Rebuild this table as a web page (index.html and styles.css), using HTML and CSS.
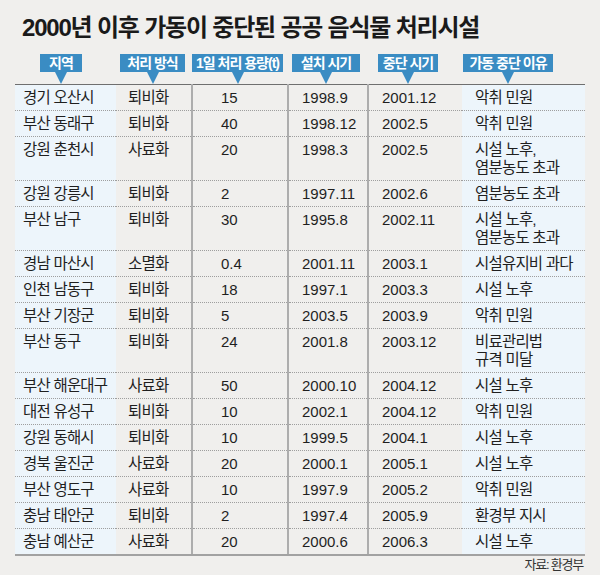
FILE: index.html
```html
<!DOCTYPE html>
<html lang="ko">
<head>
<meta charset="utf-8">
<title>2000년 이후 가동이 중단된 공공 음식물 처리시설</title>
<link rel="stylesheet" href="styles.css">
</head>
<body>
<div class="page">
  <h1 class="title">2000년 이후 가동이 중단된 공공 음식물 처리시설</h1>
  <table class="data">
    <colgroup>
      <col class="w1"><col class="w2"><col class="w3"><col class="w4"><col class="w5"><col class="w6">
    </colgroup>
    <thead>
      <tr>
        <th class="h1c"><span class="badge b1">지역</span></th>
        <th class="h2c"><span class="badge b2">처리 방식</span></th>
        <th class="h3c"><span class="badge b3">1일 처리 용량(t)</span></th>
        <th class="h4c"><span class="badge b4">설치 시기</span></th>
        <th class="h5c"><span class="badge b5">중단 시기</span></th>
        <th class="h6c"><span class="badge b6">가동 중단 이유</span></th>
      </tr>
    </thead>
    <tbody>
      <tr><td class="c1">경기 오산시</td><td class="c2">퇴비화</td><td class="c3">15</td><td class="c4">1998.9</td><td class="c5">2001.12</td><td class="c6">악취 민원</td></tr>
      <tr><td class="c1">부산 동래구</td><td class="c2">퇴비화</td><td class="c3">40</td><td class="c4">1998.12</td><td class="c5">2002.5</td><td class="c6">악취 민원</td></tr>
      <tr><td class="c1">강원 춘천시</td><td class="c2">사료화</td><td class="c3">20</td><td class="c4">1998.3</td><td class="c5">2002.5</td><td class="c6">시설 노후,<br>염분농도 초과</td></tr>
      <tr><td class="c1">강원 강릉시</td><td class="c2">퇴비화</td><td class="c3">2</td><td class="c4">1997.11</td><td class="c5">2002.6</td><td class="c6">염분농도 초과</td></tr>
      <tr><td class="c1">부산 남구</td><td class="c2">퇴비화</td><td class="c3">30</td><td class="c4">1995.8</td><td class="c5">2002.11</td><td class="c6">시설 노후,<br>염분농도 초과</td></tr>
      <tr><td class="c1">경남 마산시</td><td class="c2">소멸화</td><td class="c3">0.4</td><td class="c4">2001.11</td><td class="c5">2003.1</td><td class="c6">시설유지비 과다</td></tr>
      <tr><td class="c1">인천 남동구</td><td class="c2">퇴비화</td><td class="c3">18</td><td class="c4">1997.1</td><td class="c5">2003.3</td><td class="c6">시설 노후</td></tr>
      <tr><td class="c1">부산 기장군</td><td class="c2">퇴비화</td><td class="c3">5</td><td class="c4">2003.5</td><td class="c5">2003.9</td><td class="c6">악취 민원</td></tr>
      <tr><td class="c1">부산 동구</td><td class="c2">퇴비화</td><td class="c3">24</td><td class="c4">2001.8</td><td class="c5">2003.12</td><td class="c6">비료관리법<br>규격 미달</td></tr>
      <tr><td class="c1">부산 해운대구</td><td class="c2">사료화</td><td class="c3">50</td><td class="c4">2000.10</td><td class="c5">2004.12</td><td class="c6">시설 노후</td></tr>
      <tr><td class="c1">대전 유성구</td><td class="c2">퇴비화</td><td class="c3">10</td><td class="c4">2002.1</td><td class="c5">2004.12</td><td class="c6">악취 민원</td></tr>
      <tr><td class="c1">강원 동해시</td><td class="c2">퇴비화</td><td class="c3">10</td><td class="c4">1999.5</td><td class="c5">2004.1</td><td class="c6">시설 노후</td></tr>
      <tr><td class="c1">경북 울진군</td><td class="c2">사료화</td><td class="c3">20</td><td class="c4">2000.1</td><td class="c5">2005.1</td><td class="c6">시설 노후</td></tr>
      <tr><td class="c1">부산 영도구</td><td class="c2">사료화</td><td class="c3">10</td><td class="c4">1997.9</td><td class="c5">2005.2</td><td class="c6">악취 민원</td></tr>
      <tr><td class="c1">충남 태안군</td><td class="c2">퇴비화</td><td class="c3">2</td><td class="c4">1997.4</td><td class="c5">2005.9</td><td class="c6">환경부 지시</td></tr>
      <tr><td class="c1">충남 예산군</td><td class="c2">사료화</td><td class="c3">20</td><td class="c4">2000.6</td><td class="c5">2006.3</td><td class="c6">시설 노후</td></tr>
    </tbody>
  </table>
  <p class="source">자료: 환경부</p>
</div>
</body>
</html>
```
FILE: styles.css
```css
html, body {
  margin: 0;
  padding: 0;
  background: #f0efed;
}

body {
  font-family: "Liberation Sans", "Noto Sans CJK KR", sans-serif;
  color: #1f1f1f;
}

.page {
  width: 570px;
  height: 575px;
  padding: 0 15px;
  box-sizing: content-box;
}

.title {
  margin: 0;
  padding: 13px 0 0 7px;
  font-size: 24px;
  line-height: 30px;
  font-weight: bold;
  letter-spacing: -1.2px;
  color: #1a1a1a;
  white-space: nowrap;
}

.data {
  width: 570px;
  border-collapse: collapse;
  table-layout: fixed;
}

.w1 { width: 101px; }
.w2 { width: 76px; }
.w3 { width: 96px; }
.w4 { width: 80px; }
.w5 { width: 94px; }
.w6 { width: 123px; }

.data th {
  padding: 11px 0 12px;
  text-align: left;
  vertical-align: top;
  font-size: 14px;
  line-height: 18px;
  border-bottom: 1px solid #6f6f6f;
}

.h1c { padding-left: 25px !important; }
.h2c { padding-left: 4px !important; }
.h3c { padding-left: 0 !important; }
.h4c { padding-left: 4px !important; }
.h5c { padding-left: 10px !important; }
.h6c { padding-left: 1px !important; }

.badge {
  position: relative;
  display: inline-block;
  vertical-align: top;
  height: 18px;
  line-height: 18px;
  background: #3a8cc3;
  color: #ffffff;
  font-size: 14px;
  font-weight: bold;
  letter-spacing: -1px;
  text-align: center;
  white-space: nowrap;
}

.badge::after {
  content: "";
  position: absolute;
  left: 50%;
  top: 100%;
  margin-left: -6px;
  border-left: 6px solid transparent;
  border-right: 6px solid transparent;
  border-top: 12px solid #3a8cc3;
}

.b1 { width: 42px; }
.b2 { width: 65px; }
.b3 { width: 91px; }
.b4 { width: 68px; }
.b5 { width: 60px; }
.b6 { width: 90px; }

.data td {
  padding: 4px 0 3px;
  font-size: 15.5px;
  line-height: 18px;
  vertical-align: top;
  white-space: nowrap;
  border-bottom: 1px dotted #9e9e9e;
}

.data tbody tr:last-child td {
  border-bottom: 2px solid #a2a2a2;
}

.c1 {
  background: #edf5fb;
  padding-left: 8px !important;
  letter-spacing: -0.8px;
}

.c2 {
  padding-left: 12px !important;
  letter-spacing: -0.8px;
}

.c3, .c4, .c5 {
  border-left: 2px solid #adadad;
  font-size: 15px !important;
}

.c3 { padding-left: 28px !important; }
.c4 { padding-left: 13px !important; }
.c5 { padding-left: 13px !important; }

.c6 {
  background: #edf5fb;
  padding-left: 13px !important;
  letter-spacing: -0.8px;
}

.source {
  margin: 1px 0 0;
  padding-right: 2px;
  text-align: right;
  font-size: 13px;
  line-height: 16px;
  letter-spacing: -1.2px;
  color: #333333;
}
```
